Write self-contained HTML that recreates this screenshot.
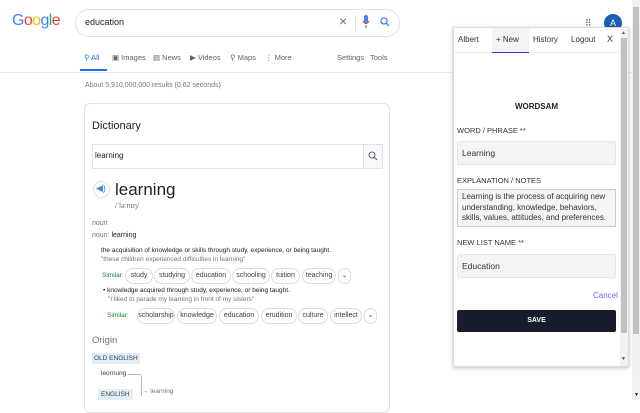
<!DOCTYPE html>
<html><head><style>
*{margin:0;padding:0;box-sizing:border-box}
body{width:640px;height:400px;overflow:hidden;background:#fff;font-family:"Liberation Sans",Arial,sans-serif;position:relative;color:#202124}
.a{position:absolute;white-space:nowrap}
.chip{position:absolute;height:16px;border:1px solid #dadce0;border-radius:8px;font-size:7px;line-height:14px;text-align:center;color:#3c4043}
</style></head><body>
<div class="a" style="left:12px;top:12px;font-size:16px;letter-spacing:-0.6px"><span style="color:#4285f4">G</span><span style="color:#ea4335">o</span><span style="color:#fbbc05">o</span><span style="color:#4285f4">g</span><span style="color:#34a853">l</span><span style="color:#ea4335">e</span></div>
<div class="a" style="left:75px;top:9px;width:325px;height:28px;border:1px solid #dfe1e5;border-radius:14px"></div>
<div class="a" style="left:85px;top:17px;font-size:9px">education</div>
<div class="a" style="left:339px;top:13px;font-size:14px;color:#70757a">×</div>
<div class="a" style="left:355px;top:15px;width:1px;height:16px;background:#dfe1e5"></div>
<svg class="a" style="left:362px;top:15px" width="8" height="14"><rect x="2" y="0" width="4" height="8" rx="2" fill="#4285f4"/><path d="M1 6 Q4 11 7 6" stroke="#ea4335" fill="none" stroke-width="1.2"/><rect x="3.4" y="10" width="1.2" height="3" fill="#34a853"/></svg>
<svg class="a" style="left:380px;top:17px" width="10" height="10"><circle cx="4" cy="4" r="3" stroke="#4285f4" stroke-width="1.3" fill="none"/><path d="M6 6 L9 9" stroke="#4285f4" stroke-width="1.4"/></svg>
<div class="a" style="left:84px;top:53px;font-size:7.5px;color:#1a73e8">⚲ All</div>
<div class="a" style="left:80px;top:69px;width:27px;height:2px;background:#1a73e8"></div>
<div class="a" style="left:112px;top:53px;font-size:7.5px;color:#5f6368">▣ Images</div>
<div class="a" style="left:153px;top:53px;font-size:7.5px;color:#5f6368">▤ News</div>
<div class="a" style="left:190px;top:53px;font-size:7.5px;color:#5f6368">▶ Videos</div>
<div class="a" style="left:230px;top:53px;font-size:7.5px;color:#5f6368">⚲ Maps</div>
<div class="a" style="left:265px;top:53px;font-size:7.5px;color:#5f6368">⋮ More</div>
<div class="a" style="left:337px;top:53px;font-size:7.5px;color:#5f6368">Settings</div>
<div class="a" style="left:370px;top:53px;font-size:7.5px;color:#5f6368">Tools</div>
<div class="a" style="left:0;top:72px;width:632px;height:1px;background:#ebebeb"></div>
<div class="a" style="left:85px;top:82px;font-size:7px;color:#70757a">About 5,910,000,000 results (0.62 seconds)</div>
<div class="a" style="left:84px;top:103px;width:306px;height:310px;border:1px solid #dfe1e5;border-radius:6px"></div>
<div class="a" style="left:92px;top:120px;font-size:11px">Dictionary</div>
<div class="a" style="left:92px;top:144px;width:291px;height:25px;border:1px solid #dfe1e5"></div>
<div class="a" style="left:363px;top:145px;width:19px;height:23px;background:#f8f9fa;border-left:1px solid #dfe1e5"></div>
<svg class="a" style="left:368px;top:151px" width="10" height="10"><circle cx="4" cy="4" r="3" stroke="#5f6368" stroke-width="1" fill="none"/><path d="M6 6 L9 9" stroke="#5f6368" stroke-width="1.1"/></svg>
<div class="a" style="left:95px;top:151px;font-size:8px">learning</div>
<div class="a" style="left:93px;top:181px;width:17px;height:17px;border-radius:50%;border:1px solid #e0e0e0"></div>
<div class="a" style="left:96px;top:183px;font-size:9px;color:#4285f4">◀)</div>
<div class="a" style="left:115px;top:180px;font-size:17px">learning</div>
<div class="a" style="left:115px;top:203px;font-size:7px;color:#70757a">/ˈləːnɪŋ/</div>
<div class="a" style="left:92px;top:220px;font-size:7px;color:#70757a;font-style:italic">noun</div>
<div class="a" style="left:92px;top:232px;font-size:7px;color:#70757a">noun: <span style="color:#202124">learning</span></div>
<div class="a" style="left:101px;top:247px;font-size:6.5px">the acquisition of knowledge or skills through study, experience, or being taught.</div>
<div class="a" style="left:101px;top:256px;font-size:6.5px;color:#70757a">"these children experienced difficulties in learning"</div>
<div class="a" style="left:102px;top:272px;font-size:6.5px;color:#188038">Similar:</div>
<div class="chip" style="left:125px;top:268px;width:28px">study</div>
<div class="chip" style="left:154px;top:268px;width:36px">studying</div>
<div class="chip" style="left:191px;top:268px;width:40px">education</div>
<div class="chip" style="left:232px;top:268px;width:38px">schooling</div>
<div class="chip" style="left:271px;top:268px;width:29px">tuition</div>
<div class="chip" style="left:302px;top:268px;width:34px">teaching</div>
<div class="chip" style="left:338px;top:268px;width:13px">⌄</div>
<div class="a" style="left:103px;top:287px;font-size:6.5px">• knowledge acquired through study, experience, or being taught.</div>
<div class="a" style="left:108px;top:296px;font-size:6.5px;color:#70757a">"I liked to parade my learning in front of my sisters"</div>
<div class="a" style="left:107px;top:312px;font-size:6.5px;color:#188038">Similar:</div>
<div class="chip" style="left:137px;top:308px;width:38px">scholarship</div>
<div class="chip" style="left:177px;top:308px;width:40px">knowledge</div>
<div class="chip" style="left:219px;top:308px;width:40px">education</div>
<div class="chip" style="left:261px;top:308px;width:36px">erudition</div>
<div class="chip" style="left:298px;top:308px;width:30px">culture</div>
<div class="chip" style="left:330px;top:308px;width:32px">intellect</div>
<div class="chip" style="left:364px;top:308px;width:13px">⌄</div>
<div class="a" style="left:92px;top:335px;font-size:9.5px;color:#70757a">Origin</div>
<div class="a" style="left:92px;top:353px;font-size:6.5px;background:#e0eef9;padding:2px 2px;color:#3c4043">OLD ENGLISH</div>
<div class="a" style="left:101px;top:370px;font-size:6.5px;color:#3c4043">leornung</div>
<div class="a" style="left:128px;top:374px;width:14px;height:22px;border-top:1px solid #bbb;border-right:1px solid #bbb;border-radius:0 3px 0 0"></div>
<div class="a" style="left:142px;top:388px;font-size:6.5px;color:#70757a">→ learning</div>
<div class="a" style="left:98px;top:389px;font-size:6.5px;background:#e0eef9;padding:2px 3px;color:#3c4043">ENGLISH</div>
<div class="a" style="left:585px;top:18px;font-size:9px;color:#5f6368;letter-spacing:-1px">⠿</div>
<div class="a" style="left:604px;top:14px;width:18px;height:18px;border-radius:50%;background:#1a5fb4;color:#fff;font-size:9px;text-align:center;line-height:18px">A</div>
<div class="a" style="left:632px;top:0;width:8px;height:400px;background:#f1f1f1"></div>
<div class="a" style="left:633px;top:7px;width:6px;height:327px;background:#c1c1c1"></div>
<div class="a" style="left:634px;top:392px;font-size:5px">▼</div>
<div class="a" style="left:453px;top:27px;width:176px;height:340px;background:#fff;border:1px solid #ddd;box-shadow:0 1px 4px rgba(0,0,0,.25)"></div>
<div class="a" style="left:454px;top:28px;width:166px;height:25px;border-bottom:1px solid #eee"></div>
<div class="a" style="left:492px;top:28px;width:37px;height:25px;background:#f4f4f4;border-bottom:1.5px solid #3d2ee0"></div>
<div class="a" style="left:458px;top:35px;font-size:8px;color:#333">Albert</div>
<div class="a" style="left:496px;top:35px;font-size:8px;color:#333">+ New</div>
<div class="a" style="left:533px;top:35px;font-size:8px;color:#333">History</div>
<div class="a" style="left:571px;top:35px;font-size:8px;color:#333">Logout</div>
<div class="a" style="left:607px;top:34px;font-size:9px;color:#333">X</div>
<div class="a" style="left:620px;top:29px;width:8px;height:337px;background:#f1f1f1"></div>
<div class="a" style="left:621px;top:38px;width:6px;height:295px;background:#c1c1c1"></div>
<div class="a" style="left:621px;top:30px;font-size:5px;color:#555">▲</div>
<div class="a" style="left:621px;top:356px;font-size:5px;color:#555">▼</div>
<div class="a" style="left:457px;top:102px;width:159px;text-align:center;font-size:8px;font-weight:bold;color:#222">WORDSAM</div>
<div class="a" style="left:457px;top:126px;font-size:7.5px;color:#333">WORD / PHRASE **</div>
<div class="a" style="left:457px;top:141px;width:159px;height:24px;background:#f4f4f4;border:1px solid #e6e6e6;border-radius:2px;font-size:8.5px;line-height:22px;padding-left:4px;color:#333">Learning</div>
<div class="a" style="left:457px;top:176px;font-size:7.5px;color:#333">EXPLANATION / NOTES</div>
<div class="a" style="left:457px;top:189px;width:159px;height:38px;background:#f4f4f4;border:1px solid #ccc;font-size:8px;line-height:10.5px;padding:2px 4px;color:#333;white-space:normal">Learning is the process of acquiring new understanding, knowledge, behaviors, skills, values, attitudes, and preferences.</div>
<div class="a" style="left:457px;top:238px;font-size:7.5px;color:#333">NEW LIST NAME **</div>
<div class="a" style="left:457px;top:254px;width:159px;height:24px;background:#f4f4f4;border:1px solid #e6e6e6;border-radius:2px;font-size:8.5px;line-height:22px;padding-left:4px;color:#333">Education</div>
<div class="a" style="left:593px;top:291px;font-size:8px;color:#7b61ff">Cancel</div>
<div class="a" style="left:457px;top:310px;width:159px;height:22px;background:#171d2b;border-radius:2px;color:#fff;font-size:7px;font-weight:bold;text-align:center;line-height:22px">SAVE</div>
</body></html>
